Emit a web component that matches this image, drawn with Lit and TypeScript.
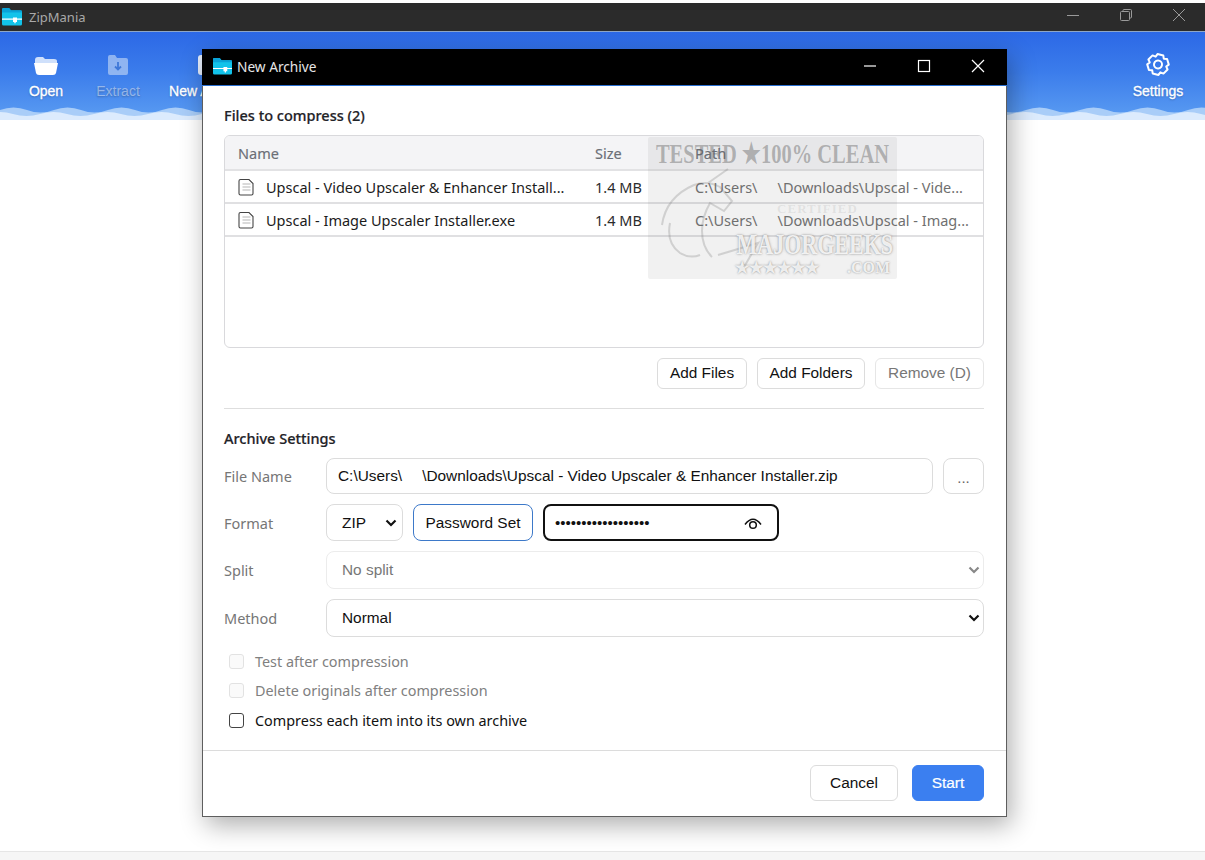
import { LitElement, html, css, svg } from "lit";
import { customElement } from "lit/decorators.js";

const folderLogo = svg`<path d="M0 2.500Q0 1 1.500 1H7l2 2.500h9.500Q20 3.500 20 5v12q0 1.500-1.500 1.500h-17Q0 18.500 0 17Z" fill="#12c3ea"/><path d="M0 5.500h20V3.800Q20 3.300 18.500 3.300H9L7 1H1.500Q0 1 0 2.500Z" fill="#0aa3d8"/><path d="M0 11.500h11v-1h4v1h5v1.200h-5v2.300h-1.300v1.300h-1.400v-1.300H11v-2.300H0Z" fill="#fff"/>`;

function wave(y: number, half: number, amp: number, phase: number) {
  let d = `M${-phase} ${y} Q${-phase + half / 2} ${y - amp} ${-phase + half} ${y}`;
  for (let x = -phase + 2 * half; x < 1205 + 2 * half; x += half) d += ` T${x} ${y}`;
  return `${d} V14 H${-phase}Z`;
}
const wave1 = wave(4, 27, 5, 0);
const wave2 = wave(8, 27, 4, 14);

@customElement("app-root")
export class AppRoot extends LitElement {
  static styles = css`
    :host { display: block; width: 1205px; height: 860px; position: relative; overflow: hidden; background: #fff; font-family: "Noto Sans", "Open Sans", sans-serif; }
    .shell { display: flex; flex-direction: column; height: 860px; padding-top: 3px; box-sizing: border-box; }
    .titlebar { height: 28px; background: #2b2b2b; display: flex; align-items: center; padding-left: 2px; color: #a9a9a9; font-size: 13px; gap: 7px; flex: none; }
    .titlebar .logo { width: 20px; height: 20px; }
    .titlebar .name { flex: 1; }
    .winbtn { width: 53px; height: 24px; margin-bottom: 4px; display: flex; align-items: center; justify-content: center; }
    .winbtn svg { width: 14px; height: 14px; fill: none; stroke: #9a9a9a; stroke-width: 1; }
    .winbtns { display: flex; }
    .ribbon { height: 89px; flex: none; position: relative; background: linear-gradient(180deg, #2c68e6 0%, #3b7ceb 45%, #5b9df2 100%); border-top: 1px solid #8ea6c8; box-sizing: border-box; display: flex; justify-content: space-between; padding: 20px 17px 0 0; }
    .wave { position: absolute; left: 0; right: 0; bottom: 0; width: 100%; height: 14px; display: block; }
    .tools { display: flex; }
    .tool { display: flex; flex-direction: column; align-items: center; width: 72px; color: #fff; font: 14px "Liberation Sans", Arial, sans-serif; -webkit-text-stroke: 0.3px #fff; text-shadow: 0 1px 2px rgba(0,0,0,.25); gap: 5px; white-space: nowrap; }
    .tool:first-child { margin-left: 10px; }
    .tool.new { margin-left: 18px; }
    .tool svg { width: 26px; height: 26px; display: block; }
    .tool.off { color: rgba(255,255,255,.45); -webkit-text-stroke: 0; }
    .tool.settings { width: 60px; }
    .main { flex: 1; }
    .status { height: 9px; flex: none; background: #f6f6f6; border-top: 1px solid #e6e6e6; box-sizing: border-box; }

    .dialog { position: absolute; left: 202px; top: 49px; width: 805px; height: 768px; box-sizing: border-box; background: #fff; border: 1px solid #5e5e5e; border-top: 0; box-shadow: 4px 8px 24px rgba(0,0,0,.32); display: flex; flex-direction: column; }
    .dbar { height: 37px; flex: none; box-sizing: border-box; background: #000; border-bottom: 1px solid #2a6fd0; display: flex; align-items: center; color: #e6e6e6; font-size: 13.700px; padding: 0 0 2px 11px; gap: 5px; margin: 0 -1px; }
    .dbar .logo { width: 19px; height: 19px; }
    .dbar .name { flex: 1; }
    .dbtn { width: 54px; height: 34px; display: flex; align-items: center; justify-content: center; }
    .dbtn svg { width: 14px; height: 14px; fill: none; stroke: #fff; stroke-width: 1.200; }
    .dbtns { display: flex; padding-right: 2px; }

    .body { flex: 1; padding: 19px 22px 0 21px; display: flex; flex-direction: column; color: #1b1b1b; min-height: 0; }
    h3 { margin: 0; font-size: 14.500px; font-weight: 500; line-height: 20px; color: #1f2328; -webkit-text-stroke: .2px #1f2328; }
    .table { margin-top: 10px; height: 213px; box-sizing: border-box; border: 1px solid #d9d9dc; border-radius: 6px; overflow: hidden; font-size: 14.500px; flex: none; }
    .row { display: grid; grid-template-columns: 357px 100px 1fr; height: 33px; box-sizing: border-box; align-items: center; border-bottom: 2px solid #e0e0e2; padding-left: 13px; }
    .row.head { height: 35px; background: #f4f4f6; color: #6b6f76; border-bottom: 2px solid #e2e2e4; -webkit-text-stroke: .15px #6b6f76; }
    .row > span { white-space: nowrap; overflow: hidden; }
    .fname { display: flex; align-items: center; gap: 11px; color: #1b1b1b; }
    .fname svg { width: 17px; height: 18px; flex: none; }
    .size { color: #2b2b2b; }
    .path { color: #6f6f6f; padding-right: 8px; white-space: pre; }
    .gap { display: inline-block; width: 20px; }
    .btns { display: flex; justify-content: flex-end; gap: 10px; margin-top: 10px; flex: none; }
    button { font: 15.400px "Liberation Sans", Arial, sans-serif; background: #fff; color: #111; border: 1px solid #dcdcdc; border-radius: 6px; height: 31px; padding: 0 0 1px; display: flex; align-items: center; justify-content: center; box-sizing: border-box; }
    .b1 { width: 90px; } .b2 { width: 108px; } .b3 { width: 109px; color: #777; border-color: #e6e6e6; }
    hr { border: 0; border-top: 1px solid #dedede; margin: 19px 0 0; flex: none; }
    h3.s { margin-top: 19px; }
    .form { display: grid; grid-template-columns: 102px 1fr; row-gap: 10px; margin-top: 10px; align-items: center; }
    .lbl { color: #767676; font-size: 14.500px; }
    .f { font: 15.400px "Liberation Sans", Arial, sans-serif; color: #111; background: #fff; border: 1px solid #dcdcdc; border-radius: 8px; box-sizing: border-box; display: flex; align-items: center; }
    .line { display: flex; gap: 10px; }
    .name-f { flex: 1; height: 36px; padding-left: 11px; white-space: pre; }
    .dots { width: 41px; height: 36px; justify-content: center; color: #666; font-size: 15px; padding-top: 2px; }
    .zip { width: 77px; height: 37px; padding: 0 5px 0 15px; justify-content: space-between; }
    .chev { width: 12px; height: 8px; fill: none; stroke: #111; stroke-width: 2.200; flex: none; }
    .pw-label { width: 120px; height: 37px; justify-content: center; border-color: #3d79c9; }
    .pw { width: 236px; height: 37px; border: 2px solid #111; padding: 0 14px 0 10px; justify-content: space-between; font-size: 15px; }
    .pw svg { width: 20px; height: 14px; fill: none; stroke: #111; stroke-width: 1.500; }
    .sel { flex: 1; height: 38px; padding: 0 3px 0 15px; justify-content: space-between; }
    .sel.off { color: #777; border-color: #ececec; }
    .sel.off .chev { stroke: #888; }
    .checks { display: flex; flex-direction: column; margin: 14px 0 0 5px; gap: 9.500px; font-size: 14.400px; }
    .check { display: flex; align-items: center; gap: 11px; height: 20px; color: #111; }
    .check.off { color: #808080; }
    .box { width: 15px; height: 15px; box-sizing: border-box; border: 1px solid #444; border-radius: 3px; background: #fff; flex: none; }
    .off .box { border-color: #e2e2e2; background: #fafafa; }
    .foot { height: 66px; flex: none; border-top: 1px solid #dcdcdc; display: flex; justify-content: flex-end; align-items: flex-start; gap: 14px; padding: 14px 22px 0 0; box-sizing: border-box; }
    .foot button { height: 36px; }
    .cancel { width: 88px; }
    .start { width: 72px; background: #3b7ff0; border-color: #3b7ff0; color: #fff; -webkit-text-stroke: .2px #fff; }

    .stamp { position: absolute; left: 648px; top: 137px; width: 249px; height: 142px; box-sizing: border-box; background: rgba(120,120,120,.1); border-radius: 2px; display: flex; flex-direction: column; align-items: center; font-family: "Liberation Serif", serif; font-weight: 700; color: rgba(95,95,95,.42); overflow: hidden; white-space: nowrap; pointer-events: none; }
    .fig { position: absolute; left: 0; top: 0; width: 249px; height: 142px; fill: none; stroke: rgba(110,110,110,.25); stroke-width: 2; }
    .st1 { font-size: 20.500px; line-height: 34px; margin-top: 0; transform: scaleY(1.35); }
    .st2 { font-size: 13px; line-height: 14px; margin-top: 31px; margin-left: 90px; color: rgba(120,120,120,.14); letter-spacing: 1px; }
    .st3 { font-size: 22px; line-height: 34px; color: rgba(255,255,255,.85); text-shadow: 0 0 2px rgba(90,90,90,.75); align-self: flex-end; margin: 12px 4px 0 0; transform: scaleY(1.3); }
    .st4 { width: 155px; display: flex; justify-content: space-between; font-size: 16px; line-height: 18px; align-self: flex-end; margin: -3px 7px 0 0; color: rgba(255,255,255,.85); text-shadow: 0 0 2px rgba(90,90,90,.75); }
  `;

  private doc() {
    return html`<svg viewBox="0 0 17 18"><path d="M2.500 1.500h8.500l4 4v10q0 1.500-1.500 1.500h-11q-1.500 0-1.500-1.500v-12.500q0-1.500 1.500-1.500Z" fill="#fff" stroke="#444" stroke-width="1.100"/><path d="M4.500 6h8M4.500 9h8M4.500 12h8" stroke="#b5b5b5" stroke-width="1.200"/></svg>`;
  }
  private chev() {
    return html`<svg class="chev" viewBox="0 0 12 8"><path d="M1.500 1.500 6 6l4.500-4.500"/></svg>`;
  }

  render() {
    return html`
      <div class="shell">
        <div class="titlebar">
          <svg class="logo" viewBox="0 0 20 20">${folderLogo}</svg>
          <span class="name">ZipMania</span>
          <div class="winbtns">
            <div class="winbtn"><svg viewBox="0 0 14 14"><path d="M1 7.500h12"/></svg></div>
            <div class="winbtn"><svg viewBox="0 0 14 14"><rect x="1.500" y="3.500" width="9" height="9" rx="1"/><path d="M4 3.500V2.500q0-1 1-1h6.500q1 0 1 1V9q0 1-1 1h-1"/></svg></div>
            <div class="winbtn"><svg viewBox="0 0 14 14"><path d="M1 1l12 12M13 1 1 13"/></svg></div>
          </div>
        </div>
        <div class="ribbon">
          <div class="tools">
            <div class="tool"><svg viewBox="0 0 26 26"><path d="M2 8q0-3 3-3h5l2 2h9q3 0 3 2v2H2Z" fill="#cfe0fb"/><path d="M1 11h24l-2 10q-.4 2-3 2H6q-2.600 0-3-2Z" fill="#fff"/></svg>Open</div>
            <div class="tool off"><svg viewBox="0 0 26 26"><path d="M3 5q0-2 2-2h5l2 3h9q2 0 2 2v13q0 2-2 2H5q-2 0-2-2Z" fill="#a5c3f2" opacity=".8"/><path d="M13 10v7M10 14.500l3 3 3-3" fill="none" stroke="#3f78d8" stroke-width="1.800"/></svg>Extract</div>
            <div class="tool new"><svg viewBox="0 0 26 26"><rect x="3" y="3" width="20" height="20" rx="3" fill="#e6eefc"/></svg>New Archive</div>
          </div>
          <div class="tool settings">
            <svg viewBox="0 0 26 26" fill="none" stroke="#fff" stroke-width="2"><g transform="rotate(14 13 12.500)"><path d="M10 2.500h6l1.200 3 3.300-.5 3 5-2 2.500 2 2.500-3 5-3.300-.5-1.200 3h-6l-1.200-3-3.300.5-3-5 2-2.500-2-2.500 3-5 3.300.5Z" stroke-linejoin="round"/><circle cx="13" cy="12.500" r="4"/></g></svg>
            Settings
          </div>
          <svg class="wave" viewBox="0 0 1205 14" preserveAspectRatio="none">
            <path d="${wave1}" fill="#a9cdf8"/>
            <path d="${wave2}" fill="#dcebfd"/>
          </svg>
        </div>
        <div class="main"></div>
        <div class="status"></div>
      </div>

      <div class="dialog">
        <div class="dbar">
          <svg class="logo" viewBox="0 0 20 20">${folderLogo}</svg>
          <span class="name">New Archive</span>
          <div class="dbtns">
            <div class="dbtn"><svg viewBox="0 0 14 14"><path d="M1 7h12"/></svg></div>
            <div class="dbtn"><svg viewBox="0 0 14 14"><rect x="1.500" y="1.500" width="11" height="11"/></svg></div>
            <div class="dbtn"><svg viewBox="0 0 14 14"><path d="M1 1l12 12M13 1 1 13"/></svg></div>
          </div>
        </div>
        <div class="body">
          <h3>Files to compress (2)</h3>
          <div class="table">
            <div class="row head"><span>Name</span><span>Size</span><span>Path</span></div>
            <div class="row">
              <span class="fname">${this.doc()}Upscal - Video Upscaler &amp; Enhancer Install...</span>
              <span class="size">1.4 MB</span>
              <span class="path">C:\\Users\\<span class="gap"></span>\\Downloads\\Upscal - Vide...</span>
            </div>
            <div class="row">
              <span class="fname">${this.doc()}Upscal - Image Upscaler Installer.exe</span>
              <span class="size">1.4 MB</span>
              <span class="path">C:\\Users\\<span class="gap"></span>\\Downloads\\Upscal - Imag...</span>
            </div>
          </div>
          <div class="btns">
            <button class="b1">Add Files</button>
            <button class="b2">Add Folders</button>
            <button class="b3">Remove (D)</button>
          </div>
          <hr />
          <h3 class="s">Archive Settings</h3>
          <div class="form">
            <span class="lbl">File Name</span>
            <div class="line">
              <div class="f name-f">C:\\Users\\<span class="gap"></span>\\Downloads\\Upscal - Video Upscaler &amp; Enhancer Installer.zip</div>
              <div class="f dots">...</div>
            </div>
            <span class="lbl">Format</span>
            <div class="line">
              <div class="f zip">ZIP ${this.chev()}</div>
              <div class="f pw-label">Password Set</div>
              <div class="f pw"><span>••••••••••••••••••</span>
                <svg viewBox="0 0 20 14"><path d="M2 8.500Q10-2 18 8.500"/><circle cx="10" cy="9" r="3.300"/></svg>
              </div>
            </div>
            <span class="lbl">Split</span>
            <div class="line"><div class="f sel off">No split ${this.chev()}</div></div>
            <span class="lbl">Method</span>
            <div class="line"><div class="f sel">Normal ${this.chev()}</div></div>
          </div>
          <div class="checks">
            <label class="check off"><span class="box"></span>Test after compression</label>
            <label class="check off"><span class="box"></span>Delete originals after compression</label>
            <label class="check"><span class="box"></span>Compress each item into its own archive</label>
          </div>
        </div>
        <div class="foot">
          <button class="cancel">Cancel</button>
          <button class="start">Start</button>
        </div>
      </div>
      <div class="stamp">
        <svg class="fig" viewBox="0 0 249 142"><path d="M14 88q4-28 32-40 14-5 26 2l12 14-8 10-14-8q-8 14-8 28 0 16 10 26M22 86q-4 20 10 30 10 6 20 2M60 46l20-14M70 118l40-12-14 24"/></svg>
        <span class="st1">TESTED ★100% CLEAN</span>
        <span class="st2">CERTIFIED</span>
        <span class="st3">MAJORGEEKS</span>
        <span class="st4"><span>★★★★★★</span><span>.COM</span></span>
      </div>
    `;
  }
}
